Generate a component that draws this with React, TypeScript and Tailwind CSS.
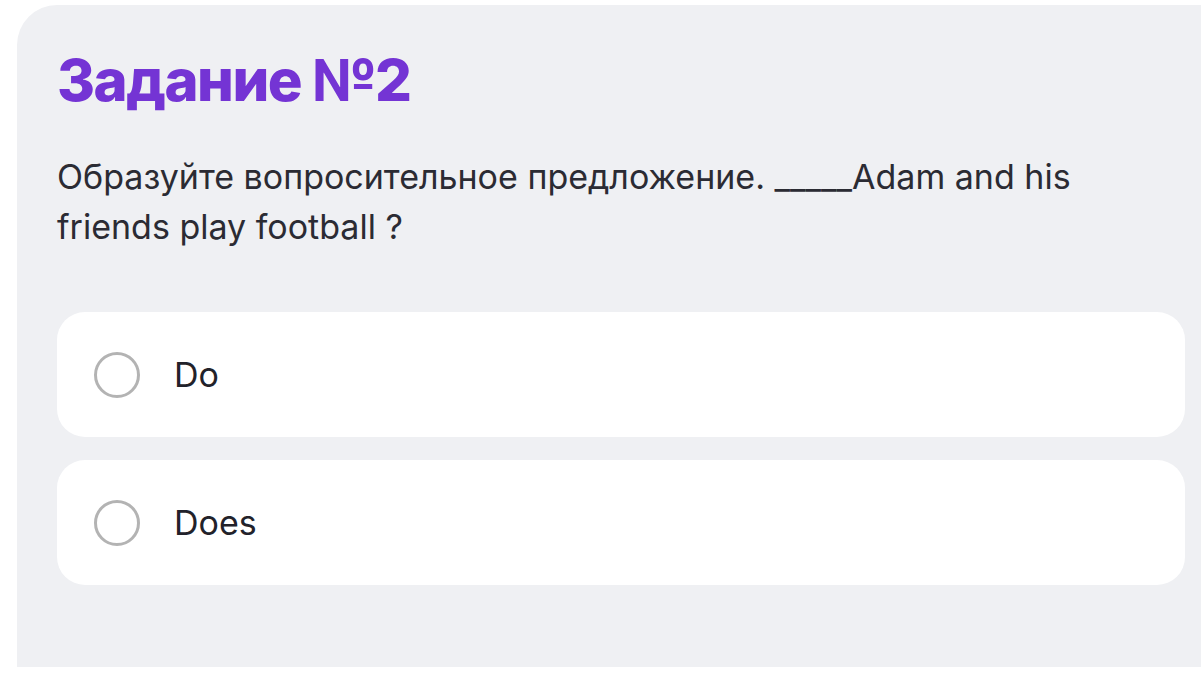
import { useState } from 'react'

const options = ['Do', 'Does']

function Radio({ checked }: { checked: boolean }) {
  return (
    <span className="flex h-[46px] w-[46px] shrink-0 items-center justify-center rounded-full border-[3px] border-[#b3b3b3] bg-white">
      {checked && <span className="h-[24px] w-[24px] rounded-full bg-[#7434d4]" />}
    </span>
  )
}

export default function App() {
  const [selected, setSelected] = useState<number | null>(null)

  return (
    <div className="h-[676px] w-full overflow-hidden bg-white pl-[17px] pt-[5px] font-['Inter',sans-serif]">
      <div className="flex h-[662px] flex-col rounded-tl-[40px] bg-[#eff0f3] pl-[40px] pr-[16px] pt-[39px]">
        <h1 className="text-[58px] font-extrabold leading-[72px] tracking-[-1.5px] text-[#7434d4]">
          Задание №2
        </h1>
        <p className="mt-[36px] text-[34px] leading-[50px] text-[#2b2b33]">
          Образуйте вопросительное предложение. _____Adam and his friends play football ?
        </p>
        <div className="mt-[60px] flex flex-col gap-[23px]">
          {options.map((opt, i) => (
            <button
              key={opt}
              onClick={() => setSelected(i)}
              className="flex h-[125px] items-center gap-[34px] rounded-[28px] bg-white pl-[37px] text-left"
            >
              <Radio checked={selected === i} />
              <span className="text-[34px] text-[#22222a]">{opt}</span>
            </button>
          ))}
        </div>
      </div>
    </div>
  )
}
